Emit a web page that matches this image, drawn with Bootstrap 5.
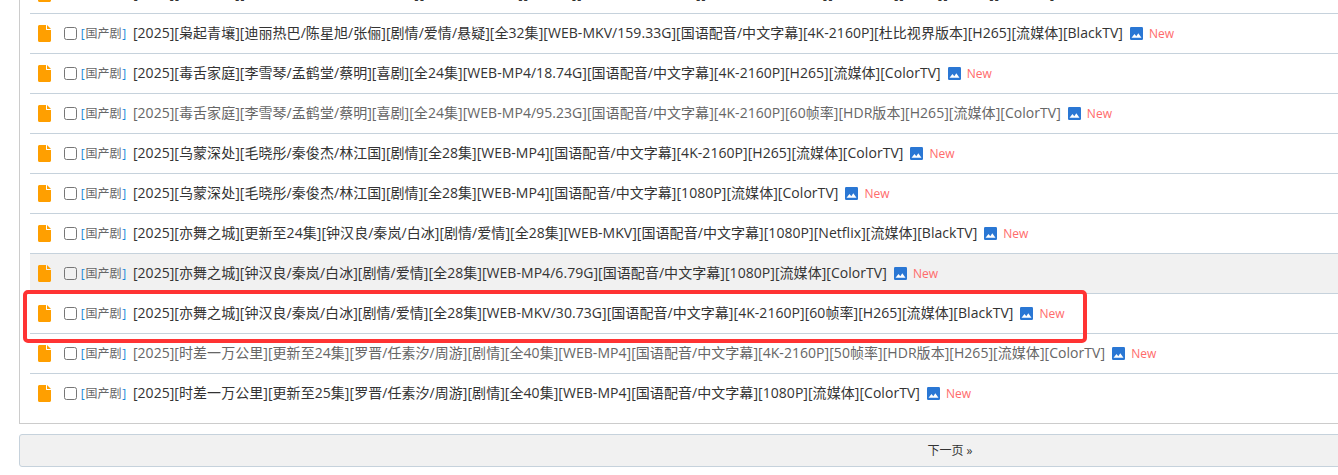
<!DOCTYPE html>
<html lang="zh-CN">
<head>
    <meta charset="UTF-8">
    <title>列表</title>
    <link rel="stylesheet" href="https://cdn.jsdelivr.net/npm/bootstrap@5.3.0/dist/css/bootstrap.min.css">
    <style>
        html, body { height: 475px; overflow: hidden; }
        body { font-family: "Open Sans", "Noto Sans CJK SC", sans-serif; font-size: 14px; color: #333; background: #fff; }
        .page-wrap { position: relative; margin-top: -28px; margin-left: 19px; width: 1862px; }
        .thread-box { border: 1px solid #ccc; padding: 0 10px 10px; background: #fff; }
        .thread-row { height: 40px; border-top: 1px solid #c6d2dc; white-space: nowrap; padding-left: 8px; }
        .thread-row.is-hover { background: #f1f1f1; }
        .doc-icon { width: 13px; height: 17px; margin-right: 13px; flex: none; }
        .tick { width: 13px; height: 13px; border: 1px solid #767676; border-radius: 2.5px; margin-right: 3px; flex: none; }
        .cat { font-size: 12px; color: #666; margin-right: 6px; }
        .cat b { font-weight: 400; color: #1b87d6; padding: 0 .75px; }
        .ttl { color: #333; letter-spacing: .05px; margin-bottom: 2px; }
        .ttl.seen { color: #666; }
        .pic-icon { width: 13px; height: 13px; margin-left: 7px; margin-right: 6px; flex: none; }
        .new-tag { font-size: 12px; color: #ff6b6b; }
        .next-bar { margin-top: 10px; height: 33px; background: #f1f1f1; border: 1px solid #c6d2dc; border-radius: 3px; font-size: 12px; color: #333; }
        .red-mark { position: absolute; left: 4px; top: 318px; width: 1064px; height: 53px; border: 4px solid #ff3333; border-radius: 5px; }
    </style>
</head>
<body>
<div class="page-wrap">
    <div class="thread-box" id="list"></div>
    <div class="next-bar d-flex align-items-center justify-content-center">下一页 »</div>
    <div class="red-mark"></div>
</div>

<script>
    const rows = [
        ['[2025][枭起青壤][迪丽热巴/陈星旭/张俪/主演][剧情/爱情/悬疑][全32集][WEB-MP4/38.63G][国语配音/中文字幕][4K-2160P][H265][流媒体][ColorTV]', 0],
        ['[2025][枭起青壤][迪丽热巴/陈星旭/张俪][剧情/爱情/悬疑][全32集][WEB-MKV/159.33G][国语配音/中文字幕][4K-2160P][杜比视界版本][H265][流媒体][BlackTV]', 0],
        ['[2025][毒舌家庭][李雪琴/孟鹤堂/蔡明][喜剧][全24集][WEB-MP4/18.74G][国语配音/中文字幕][4K-2160P][H265][流媒体][ColorTV]', 0],
        ['[2025][毒舌家庭][李雪琴/孟鹤堂/蔡明][喜剧][全24集][WEB-MP4/95.23G][国语配音/中文字幕][4K-2160P][60帧率][HDR版本][H265][流媒体][ColorTV]', 1],
        ['[2025][乌蒙深处][毛晓彤/秦俊杰/林江国][剧情][全28集][WEB-MP4][国语配音/中文字幕][4K-2160P][H265][流媒体][ColorTV]', 0],
        ['[2025][乌蒙深处][毛晓彤/秦俊杰/林江国][剧情][全28集][WEB-MP4][国语配音/中文字幕][1080P][流媒体][ColorTV]', 0],
        ['[2025][亦舞之城][更新至24集][钟汉良/秦岚/白冰][剧情/爱情][全28集][WEB-MKV][国语配音/中文字幕][1080P][Netflix][流媒体][BlackTV]', 0],
        ['[2025][亦舞之城][钟汉良/秦岚/白冰][剧情/爱情][全28集][WEB-MP4/6.79G][国语配音/中文字幕][1080P][流媒体][ColorTV]', 0, 1],
        ['[2025][亦舞之城][钟汉良/秦岚/白冰][剧情/爱情][全28集][WEB-MKV/30.73G][国语配音/中文字幕][4K-2160P][60帧率][H265][流媒体][BlackTV]', 0],
        ['[2025][时差一万公里][更新至24集][罗晋/任素汐/周游][剧情][全40集][WEB-MP4][国语配音/中文字幕][4K-2160P][50帧率][HDR版本][H265][流媒体][ColorTV]', 1],
        ['[2025][时差一万公里][更新至25集][罗晋/任素汐/周游][剧情][全40集][WEB-MP4][国语配音/中文字幕][1080P][流媒体][ColorTV]', 0]
    ];

    const docSvg = '<svg class="doc-icon" viewBox="0 0 13 17"><path fill="#ff9f00" d="M1.5 0H8v4.5c0 .3.2.5.5.5H13v10.5c0 .8-.7 1.5-1.5 1.5h-10C.7 17 0 16.3 0 15.5v-14C0 .7.7 0 1.5 0zM9 0l4 4H9z"/></svg>';
    const picSvg = '<svg class="pic-icon" viewBox="0 0 13 13"><rect width="13" height="13" rx="1.2" fill="#2a77d4"/><path fill="#fff" d="M1.5 10.8l3-3.8 1.8 2.2 2-2.9 3.2 4.5z"/></svg>';

    let html = '';
    rows.forEach(r => {
        html += `<div class="thread-row d-flex align-items-center${r[2] ? ' is-hover' : ''}">${docSvg}<span class="tick"></span>` +
            `<span class="cat"><b>[</b>国产剧<b>]</b></span><span class="ttl${r[1] ? ' seen' : ''}">${r[0]}</span>${picSvg}<span class="new-tag">New</span></div>`;
    });
    document.getElementById('list').innerHTML = html;
</script>
<script src="https://cdn.jsdelivr.net/npm/bootstrap@5.3.0/dist/js/bootstrap.bundle.min.js"></script>
</body>
</html>
